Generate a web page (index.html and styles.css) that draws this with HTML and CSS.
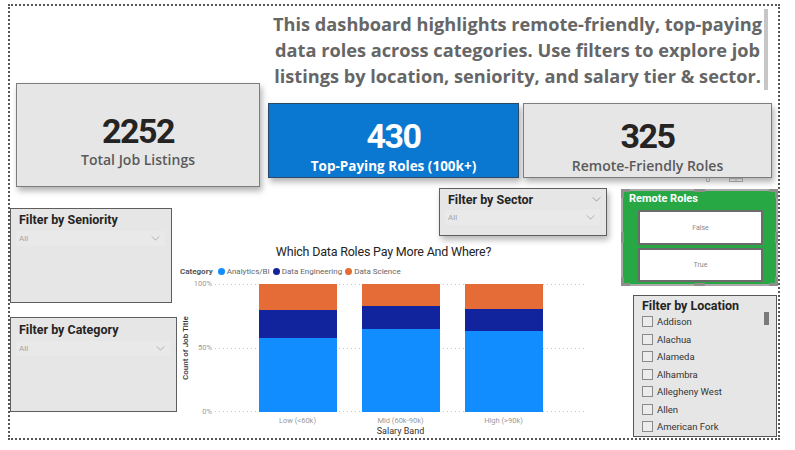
FILE: index.html
```html
<!DOCTYPE html>
<html lang="en">
<head>
<meta charset="utf-8">
<title>Data Roles Dashboard</title>
<link rel="stylesheet" href="styles.css">
</head>
<body>
<div class="canvas">
  <div class="intro">
    <p class="intro-text">This dashboard highlights remote-friendly, top-paying<br>data roles across categories. Use filters to explore job<br>listings by location, seniority, and salary tier &amp; sector.</p>
    <div class="intro-scroll"></div>
  </div>

  <div class="card card-total">
    <div class="card-value">2252</div>
    <div class="card-label">Total Job Listings</div>
  </div>
  <div class="card card-top">
    <div class="card-value">430</div>
    <div class="card-label">Top-Paying Roles (100k+)</div>
  </div>
  <div class="card card-remote">
    <div class="card-value">325</div>
    <div class="card-label">Remote-Friendly Roles</div>
  </div>

  <svg class="stray-handles" viewBox="0 0 139 9">
    <path d="M73.5 0V3.5H76.5V0"/>
    <rect x="96.5" y="0.5" width="13" height="3"/>
    <path d="M103 0.5V3.5"/>
  </svg>

  <div class="slicer slicer-sector">
    <div class="slicer-head">
      <span class="slicer-title">Filter by Sector</span>
      <svg class="chev chev-head" viewBox="0 0 10 6"><polyline points="0.5,0.5 5,5 9.5,0.5"/></svg>
    </div>
    <div class="dropdown"><span>All</span><svg class="chev" viewBox="0 0 10 6"><polyline points="0.5,0.5 5,5 9.5,0.5"/></svg></div>
  </div>

  <div class="remote-roles">
    <div class="remote-title">Remote Roles</div>
    <div class="remote-btn">False</div>
    <div class="remote-btn">True</div>
    <svg class="handles" viewBox="0 0 157 97">
      <path d="M1.5 9V1.5H9M148 1.5H155.5V9M1.5 88V95.5H9M148 95.5H155.5V88M73 1.5H84M73 95.5H84M1.5 43V54M155.5 43V54"/>
    </svg>
  </div>

  <div class="slicer slicer-seniority">
    <div class="slicer-head"><span class="slicer-title">Filter by Seniority</span></div>
    <div class="dropdown"><span>All</span><svg class="chev" viewBox="0 0 10 6"><polyline points="0.5,0.5 5,5 9.5,0.5"/></svg></div>
  </div>

  <div class="slicer slicer-category">
    <div class="slicer-head"><span class="slicer-title">Filter by Category</span></div>
    <div class="dropdown"><span>All</span><svg class="chev" viewBox="0 0 10 6"><polyline points="0.5,0.5 5,5 9.5,0.5"/></svg></div>
  </div>

  <div class="slicer slicer-location">
    <div class="slicer-head"><span class="slicer-title">Filter by Location</span></div>
    <ul class="loc-list">
      <li><span class="box"></span>Addison</li>
      <li><span class="box"></span>Alachua</li>
      <li><span class="box"></span>Alameda</li>
      <li><span class="box"></span>Alhambra</li>
      <li><span class="box"></span>Allegheny West</li>
      <li><span class="box"></span>Allen</li>
      <li><span class="box"></span>American Fork</li>
    </ul>
    <div class="loc-thumb"></div>
  </div>

  <div class="chart">
    <div class="chart-title">Which Data Roles Pay More And Where?</div>
    <div class="legend">
      <span class="legend-head">Category</span>
      <span class="legend-item"><i class="dot c-blue"></i>Analytics/BI</span>
      <span class="legend-item"><i class="dot c-navy"></i>Data Engineering</span>
      <span class="legend-item"><i class="dot c-orange"></i>Data Science</span>
    </div>
    <div class="y-title">Count of Job Title</div>
    <div class="y-ticks"><span>100%</span><span>50%</span><span>0%</span></div>
    <div class="plot">
      <div class="bar">
        <div class="seg c-orange" style="height:20.3%"></div>
        <div class="seg c-navy" style="height:21.9%"></div>
        <div class="seg c-blue" style="height:57.8%"></div>
      </div>
      <div class="bar">
        <div class="seg c-orange" style="height:17%"></div>
        <div class="seg c-navy" style="height:18.3%"></div>
        <div class="seg c-blue" style="height:64.7%"></div>
      </div>
      <div class="bar">
        <div class="seg c-orange" style="height:19.3%"></div>
        <div class="seg c-navy" style="height:17.2%"></div>
        <div class="seg c-blue" style="height:63.5%"></div>
      </div>
    </div>
    <div class="x-labels"><span>Low (&lt;60k)</span><span>Mid (60k-90k)</span><span>High (&gt;90k)</span></div>
    <div class="x-title">Salary Band</div>
  </div>
</div>
</body>
</html>
```
FILE: styles.css
```css
* { box-sizing: border-box; margin: 0; padding: 0; }

body {
  margin: 0;
  width: 795px;
  height: 450px;
  overflow: hidden;
  background: #ffffff;
  font-family: "Open Sans", "Liberation Sans", sans-serif;
}

.canvas {
  margin: 4px 0 0 8px;
  width: 772px;
  height: 436px;
  border: 2px dotted #555;
  display: grid;
  grid-template-columns: 6px 156px 5px 83px 8px 171px 80px 4px 84px 14px 12px 139px 5px 1px;
  grid-template-rows: 4px 73px 7px 13px 75px 9px 1px 1px 19px 28px 4px 46px 9px 8px 14px 95px 25px 1px;
}

/* intro text */
.intro {
  grid-column: 6 / 13;
  grid-row: 2 / 4;
  display: flex;
  align-items: stretch;
}
.intro-text {
  flex: 1;
  padding: 1px 0 0 4px;
  text-align: center;
  font-family: "Open Sans", sans-serif;
  font-weight: 700;
  font-size: 18.2px;
  line-height: 26px;
  color: #666666;
  white-space: nowrap;
}
.intro-scroll {
  width: 4px;
  margin: -1px 4px 0 1px;
  background: #c6c6c6;
}

/* KPI cards */
.card {
  background: #e6e6e6;
  border: 1.5px solid #7d7d7d;
  box-shadow: 2px 4px 6px rgba(0, 0, 0, 0.3);
  display: flex;
  flex-direction: column;
  align-items: center;
  padding-top: 14px;
}
.card-total { grid-column: 2 / 5; grid-row: 3 / 7; padding-top: 29px; }
.card-top { grid-column: 6 / 8; grid-row: 5 / 6; background: #0a78d0; border-color: #2a4a68; }
.card-remote { grid-column: 9 / 13; grid-row: 5 / 6; }

.card-value {
  font-family: "Roboto", sans-serif;
  font-weight: 700;
  font-size: 34px;
  line-height: 36px;
  letter-spacing: -1.5px;
  color: #252423;
}
.card-label {
  margin-top: 2px;
  font-family: "Open Sans", sans-serif;
  font-weight: 600;
  font-size: 14px;
  line-height: 20px;
  color: #5a5a5a;
}
.card-total .card-label { margin-top: 1px; }
.card-top .card-value { color: #ffffff; }
.card-top .card-label { color: #ffffff; font-weight: 700; font-size: 13.5px; }

.stray-handles {
  grid-column: 12 / 13;
  grid-row: 6 / 7;
  width: 139px;
  height: 9px;
  fill: none;
  stroke: #9a9a9a;
  stroke-width: 1;
}

/* slicers */
.slicer {
  background: #e6e6e6;
  border: 1.5px solid #5e5e5e;
  padding: 2px 6px 0 8px;
  display: flex;
  flex-direction: column;
}
.slicer-head {
  display: flex;
  align-items: center;
  justify-content: space-between;
  height: 16px;
}
.slicer-title {
  font-family: "Roboto", sans-serif;
  font-weight: 700;
  font-size: 12.5px;
  color: #252423;
}
.dropdown {
  margin: 4px 0 0 -3px;
  height: 15px;
  display: flex;
  align-items: center;
  justify-content: space-between;
  padding: 0 5px 0 3px;
  background: #e9e9e9;
  font-family: "Roboto", sans-serif;
  font-size: 8px;
  color: #a3a3a3;
}
.chev {
  width: 9px;
  height: 5px;
  fill: none;
  stroke: #a0a0a0;
  stroke-width: 0.9;
}
.chev-head { margin-right: -1px; stroke: #888; }

.slicer-seniority { grid-column: 1 / 3; grid-row: 10 / 15; }
.slicer-category { grid-column: 1 / 4; grid-row: 16 / 17; padding-top: 3px; }
.slicer-sector {
  grid-column: 7 / 10;
  grid-row: 8 / 11;
  box-shadow: 2px 4px 6px rgba(0, 0, 0, 0.28);
}
.slicer-sector .dropdown { margin-top: 3px; }

.slicer-location {
  grid-column: 12 / 14;
  grid-row: 14 / 18;
  position: relative;
  border-color: #555;
  padding-top: 1px;
}
.loc-list { list-style: none; }
.loc-list li {
  height: 17.5px;
  display: flex;
  align-items: center;
  font-family: "Roboto", sans-serif;
  font-size: 9.5px;
  color: #333333;
}
.loc-list .box {
  width: 11px;
  height: 11px;
  border: 1px solid #8a8a8a;
  background: #ececec;
  margin-right: 4px;
}
.loc-thumb {
  position: absolute;
  right: 7px;
  top: 16px;
  width: 5px;
  height: 13px;
  background: #7a7a7a;
}

/* remote roles */
.remote-roles {
  grid-column: 11 / 15;
  grid-row: 9 / 13;
  position: relative;
  background: #28a745;
  border: 2px solid #a8a8a8;
  padding: 0 13px 0 15px;
  display: flex;
  flex-direction: column;
  gap: 3px;
}
.remote-title {
  margin-left: -9px;
  height: 16px;
  line-height: 16px;
  font-family: "Roboto", sans-serif;
  font-weight: 700;
  font-size: 11px;
  color: #ffffff;
}
.remote-btn {
  height: 35px;
  background: #ffffff;
  border: 2px solid #6b6b6b;
  display: flex;
  align-items: center;
  justify-content: center;
  font-family: "Roboto", sans-serif;
  font-size: 7px;
  color: #8a8a8a;
}
.remote-btn + .remote-btn { height: 34px; }
.handles {
  position: absolute;
  left: -2px;
  top: -2px;
  width: 157px;
  height: 97px;
  fill: none;
  stroke: #8e8e8e;
  stroke-width: 3;
}

/* chart */
.chart {
  grid-column: 4 / 10;
  grid-row: 12 / 18;
  display: grid;
  grid-template-columns: 16px 19px 3px 371px 21px;
  grid-template-rows: 24px 14px 6px 128px 13px 12px;
  font-family: "Roboto", sans-serif;
}
.chart-title {
  grid-column: 1 / 6;
  grid-row: 1;
  padding-right: 17px;
  text-align: center;
  font-size: 12.5px;
  letter-spacing: -0.2px;
  line-height: 24px;
  color: #252423;
}
.legend {
  grid-column: 1 / 6;
  grid-row: 2;
  padding-left: 3px;
  display: flex;
  align-items: center;
  font-size: 8px;
  color: #666666;
}
.legend-head { font-weight: 700; color: #555; margin-right: 5px; }
.legend-item { display: flex; align-items: center; margin-right: 3px; }
.dot {
  width: 7px;
  height: 7px;
  border-radius: 50%;
  margin-right: 2px;
}
.c-blue { background: #118dff; }
.c-navy { background: #12239e; }
.c-orange { background: #e66c37; }

.y-title {
  grid-column: 1;
  grid-row: 4;
  writing-mode: vertical-rl;
  transform: rotate(180deg);
  display: flex;
  align-items: center;
  justify-content: center;
  font-size: 8px;
  font-weight: 500;
  color: #333333;
  white-space: nowrap;
}
.y-ticks {
  grid-column: 2;
  grid-row: 4;
  margin: -5px 0;
  display: flex;
  flex-direction: column;
  justify-content: space-between;
  align-items: flex-end;
  font-size: 7.5px;
  line-height: 10px;
  color: #9a9a9a;
}
.plot {
  grid-column: 4;
  grid-row: 4;
  display: flex;
  justify-content: center;
  gap: 25px;
  background-image:
    repeating-linear-gradient(90deg, #c8c8c8 0 1px, transparent 1px 4px),
    repeating-linear-gradient(90deg, #c8c8c8 0 1px, transparent 1px 4px),
    repeating-linear-gradient(90deg, #c8c8c8 0 1px, transparent 1px 4px);
  background-size: 100% 1px;
  background-position: 0 0, 0 50%, 0 100%;
  background-repeat: no-repeat;
}
.bar {
  width: 78px;
  display: flex;
  flex-direction: column;
}
.seg { width: 100%; }
.x-labels {
  grid-column: 4;
  grid-row: 5;
  display: flex;
  justify-content: center;
  gap: 25px;
  padding-top: 2px;
  font-size: 7.5px;
  line-height: 13px;
  color: #9a9a9a;
}
.x-labels span { width: 78px; text-align: center; }
.x-title {
  grid-column: 4;
  grid-row: 6;
  text-align: center;
  font-size: 9px;
  line-height: 12px;
  color: #333333;
}
```
